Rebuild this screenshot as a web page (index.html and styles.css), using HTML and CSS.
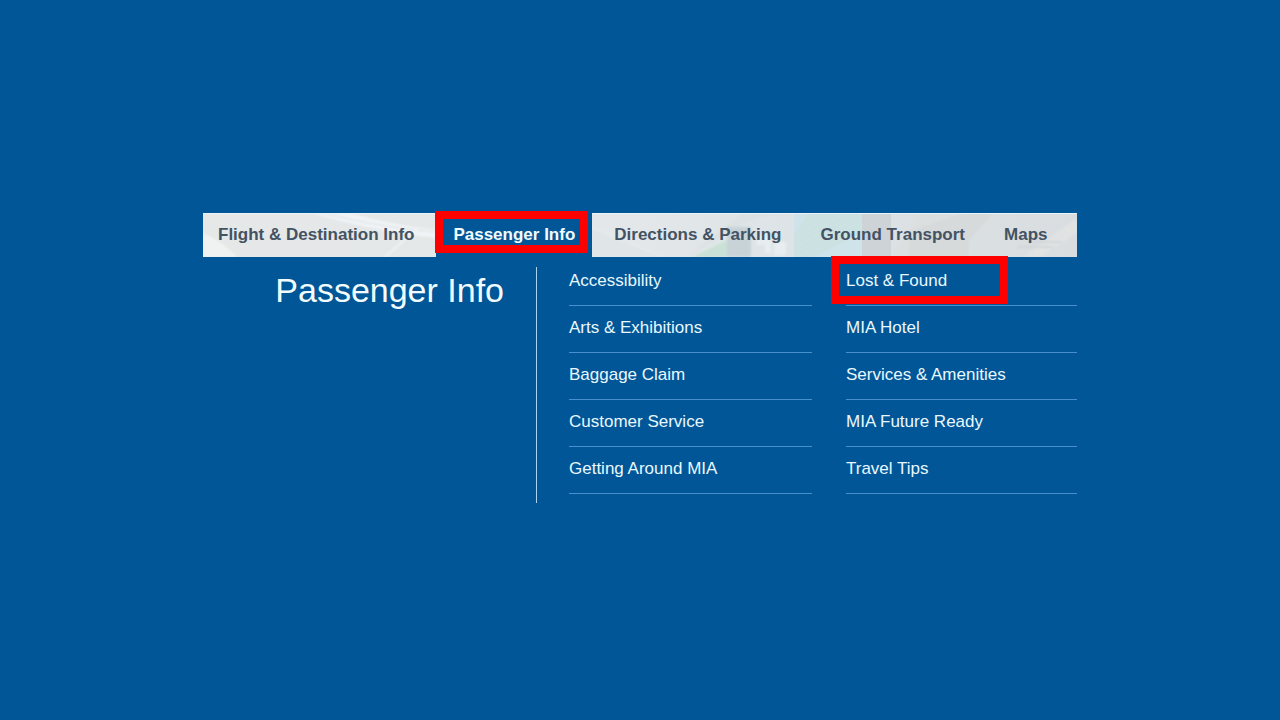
FILE: index.html
```html
<!DOCTYPE html>
<html lang="en">
<head>
    <meta charset="UTF-8">
    <meta name="viewport" content="width=device-width, initial-scale=1.0">
    <title>Passenger Info</title>
    <link rel="stylesheet" href="styles.css">
</head>
<body>
    <div class="container">
        <nav class="tabs">
            <svg class="tabs-bg" viewBox="0 0 874 44" preserveAspectRatio="none" aria-hidden="true">
                <defs>
                    <linearGradient id="base">
                        <stop offset="0" stop-color="#e6e8e8"/>
                        <stop offset="0.5" stop-color="#e3e7e9"/>
                        <stop offset="0.7" stop-color="#dce3e6"/>
                        <stop offset="1" stop-color="#d9dddf"/>
                    </linearGradient>
                    <pattern id="dots" width="5" height="5" patternUnits="userSpaceOnUse" patternTransform="rotate(-30)">
                        <rect width="5" height="5" fill="#c3e0e5"/>
                        <rect width="5" height="2" fill="#c6e4da"/>
                    </pattern>
                    <filter id="soft"><feGaussianBlur stdDeviation="1"/></filter>
                </defs>
                <rect width="874" height="44" fill="url(#base)"/>
                <g filter="url(#soft)">
                    <path d="M0 20 Q22 30 34 44 H0Z" fill="#f0f2f2"/>
                    <path d="M110 0 H145 Q190 12 233 17 V25 Q160 16 110 0Z" fill="#f1f4f6"/>
                    <path d="M120 0 Q180 15 233 19" fill="none" stroke="#dadee3" stroke-width="1"/>
                    <path d="M214 16 L182 44" stroke="#f1f2f2" stroke-width="2"/>
                    <path d="M389 15 L460 44 H389Z" fill="#e0e5e7"/>
                    <path d="M389 15 L460 44" stroke="#ebeeee" stroke-width="1"/>
                    <path d="M484 44 L540 11 L560 3 L588 0 H540Z" fill="#dce1e3"/>
                    <path d="M490 44 L524 27 V44Z" fill="#c9e1d6"/>
                    <path d="M524 14 H548 V44 H524Z" fill="#c8d3d8"/>
                    <path d="M554 22 H568 V40 H562 V32 H554Z M571 29 H583 V42 H571Z" fill="#e8eef0"/>
                    <path d="M688 44 L715 0 H748 L709 44Z" fill="#dcdfe0"/>
                    <path d="M709 17 L760 0 H790 L766 28 V44 H705Z" fill="#d7dadb"/>
                    <path d="M820 44 L874 5 V20 L836 44Z" fill="#e1e3e3"/>
                    <path d="M815 34 H850 M825 29 H858" stroke="#d2d6d8" stroke-width="2"/>
                </g>
                <rect x="591" width="68" height="44" fill="url(#dots)" opacity="0.7"/>
                <path d="M591 0 H605 L591 22Z M611 44 L659 20 V44Z" fill="#d0e4ec" opacity="0.7"/>
                <rect x="659" width="29" height="44" fill="#cdd3d7"/>
                <path d="M0 0.5 H874" stroke="#edf4f7" stroke-width="1"/>
            </svg>
            <a class="tab first" href="#">Flight &amp; Destination Info</a>
            <a class="tab active" href="#">Passenger Info<span class="marker marker-tab"></span></a>
            <a class="tab" href="#">Directions &amp; Parking</a>
            <a class="tab" href="#">Ground Transport</a>
            <a class="tab" href="#">Maps</a>
        </nav>
        <div class="panel">
            <h1>Passenger Info</h1>
            <ul class="links">
                <li><a href="#">Accessibility</a></li>
                <li><a href="#">Arts &amp; Exhibitions</a></li>
                <li><a href="#">Baggage Claim</a></li>
                <li><a href="#">Customer Service</a></li>
                <li><a href="#">Getting Around MIA</a></li>
            </ul>
            <ul class="links">
                <li><a href="#">Lost &amp; Found</a><span class="marker marker-link"></span></li>
                <li><a href="#">MIA Hotel</a></li>
                <li><a href="#">Services &amp; Amenities</a></li>
                <li><a href="#">MIA Future Ready</a></li>
                <li><a href="#">Travel Tips</a></li>
            </ul>
        </div>
    </div>
</body>
</html>
```
FILE: styles.css
```css
* { box-sizing: border-box; }
body { margin: 0; min-height: 100vh; padding-bottom: 4px; display: flex; align-items: center; justify-content: center; background-color: #005696; font-family: "Liberation Sans", Arial, sans-serif; font-size: 17px; }
a { color: inherit; text-decoration: none; }
.container { width: 100%; max-width: 874px; color: #e9f8ff; }

.tabs { position: relative; display: flex; color: #435363; font-weight: bold; line-height: 44px; }
.tabs-bg { position: absolute; top: 0; left: 0; width: 100%; height: 100%; }
.tab { position: relative; padding: 0 20px 0 19px; white-space: nowrap; }
.tab.first { padding: 0 22px 0 15px; }
.tab.active { padding: 0 17px; background-color: #005696; color: #f2fcff; }
.tab.active + .tab { padding-left: 22px; }

.panel { display: grid; grid-template-columns: 334fr 275fr 265fr; margin-top: 10px; }
h1 { margin: 0; padding-right: 32px; border-right: 1px solid #a9d3ee; font-size: 34px; font-weight: normal; line-height: 46px; text-align: right; color: #f2fcff; }
.links { list-style: none; margin: 0 0 9px 32px; padding: 0; }
.links + .links { margin-left: 34px; }
.links li { position: relative; padding: 8px 0 10px; border-bottom: 1px solid #4790cc; line-height: 28px; }
.links li:first-child { padding-top: 0; }

/* red highlight boxes */
.marker { position: absolute; z-index: 1; border: 8px solid #ff0000; pointer-events: none; }
.marker-tab { top: -2px; left: -1px; right: 4px; height: 42px; }
.marker-link { top: -11px; left: -15px; width: 177px; height: 48px; }
```
